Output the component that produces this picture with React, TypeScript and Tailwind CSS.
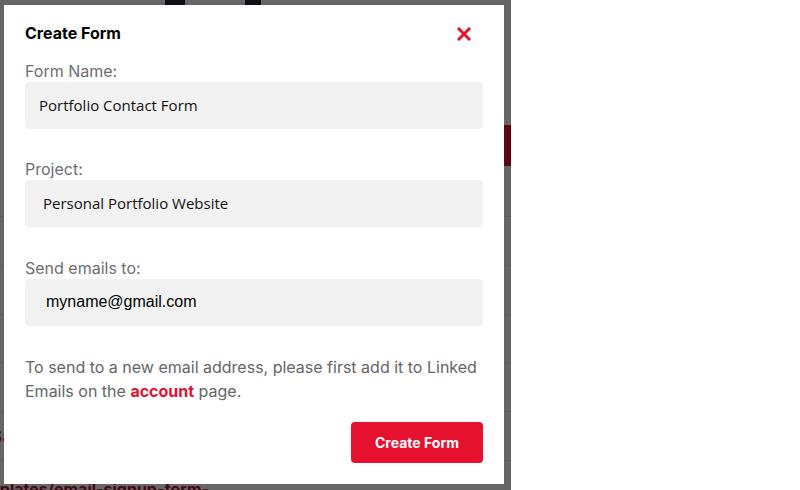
import React from 'react';

const rows = ['', '', '', '', 'Sales Inquiry'];

function CloseIcon() {
  return (
    <svg width="14" height="14" viewBox="0 0 14 14" fill="none">
      <path d="M2 2L12 12M12 2L2 12" stroke="#e5112f" strokeWidth="3" strokeLinecap="square" />
    </svg>
  );
}

function Field({ label, value, textClass }: { label: string; value: string; textClass: string }) {
  return (
    <div className="flex flex-col">
      <label className="text-[16px] leading-[22px] text-[#6e6e6e]">{label}</label>
      <div className={`h-[47px] bg-[#f2f2f2] rounded-[4px] flex items-center ${textClass}`}>{value}</div>
    </div>
  );
}

export default function App() {
  return (
    <div className="w-[800px] h-[490px] bg-white flex overflow-hidden" style={{ fontFamily: 'Inter, "Liberation Sans", sans-serif' }}>
      <div className="relative w-[511px] h-full overflow-hidden">
        {/* page behind the modal */}
        <div className="flex flex-col">
          <div className="h-[125px] shrink-0 flex pl-[165px] gap-[60px]">
            <div className="w-[20px] h-[5px] bg-[#1f2937]" />
            <div className="w-[16px] h-[5px] bg-[#1f2937]" />
          </div>
          <div className="flex justify-end shrink-0">
            <div className="w-[80px] h-[41px] bg-[#e5112f] text-white font-bold text-sm flex items-center px-3">Form</div>
          </div>
          <div className="h-[51px] shrink-0 border-b border-[#e5e5e5]" />
          {rows.map((r, i) => (
            <div key={i} className="h-[48.8px] shrink-0 border-b border-[#e5e5e5] flex items-center text-[#b01030] text-[16px] -ml-[8px]">{r}</div>
          ))}
          <div className="shrink-0 text-[#b01030] font-bold text-[16px] leading-[20px] mt-[18px] -ml-[30px] whitespace-nowrap">templates/email-signup-form-</div>
        </div>

        {/* overlay */}
        <div className="absolute inset-0 bg-black/60 pt-[5px] pl-[4px]">
          <div className="w-[500px] h-[479px] bg-white pt-[16px] px-[21px] pb-[21px] flex flex-col">
            <div className="flex items-center justify-between h-[24px]">
              <h2 className="text-[16px] font-bold text-black leading-[24px]">Create Form</h2>
              <button className="mr-[12px] mt-[1px]"><CloseIcon /></button>
            </div>
            <div className="mt-[15px]">
              <Field label="Form Name:" value="Portfolio Contact Form" textClass="pl-[14px] text-[15px] text-[#111] [font-family:'Open_Sans',sans-serif]" />
            </div>
            <div className="mt-[29px]">
              <Field label="Project:" value="Personal Portfolio Website" textClass="pl-[18px] text-[15px] text-[#111] [font-family:'Open_Sans',sans-serif]" />
            </div>
            <div className="mt-[30px]">
              <Field label="Send emails to:" value="myname@gmail.com" textClass="pl-[21px] pb-[1px] text-[16px] text-black [font-family:'Liberation_Sans',Arial,sans-serif]" />
            </div>
            <p className="mt-[29px] text-[16px] leading-[24px] text-[#666]">
              To send to a new email address, please first add it to Linked Emails on the{' '}
              <a className="text-[#e5112f] font-bold">account</a> page.
            </p>
            <div className="flex justify-end mt-[19px]">
              <button className="w-[132px] h-[41px] bg-[#e5112f] rounded-[4px] text-white font-bold text-[14px]">Create Form</button>
            </div>
          </div>
        </div>
      </div>
    </div>
  );
}
